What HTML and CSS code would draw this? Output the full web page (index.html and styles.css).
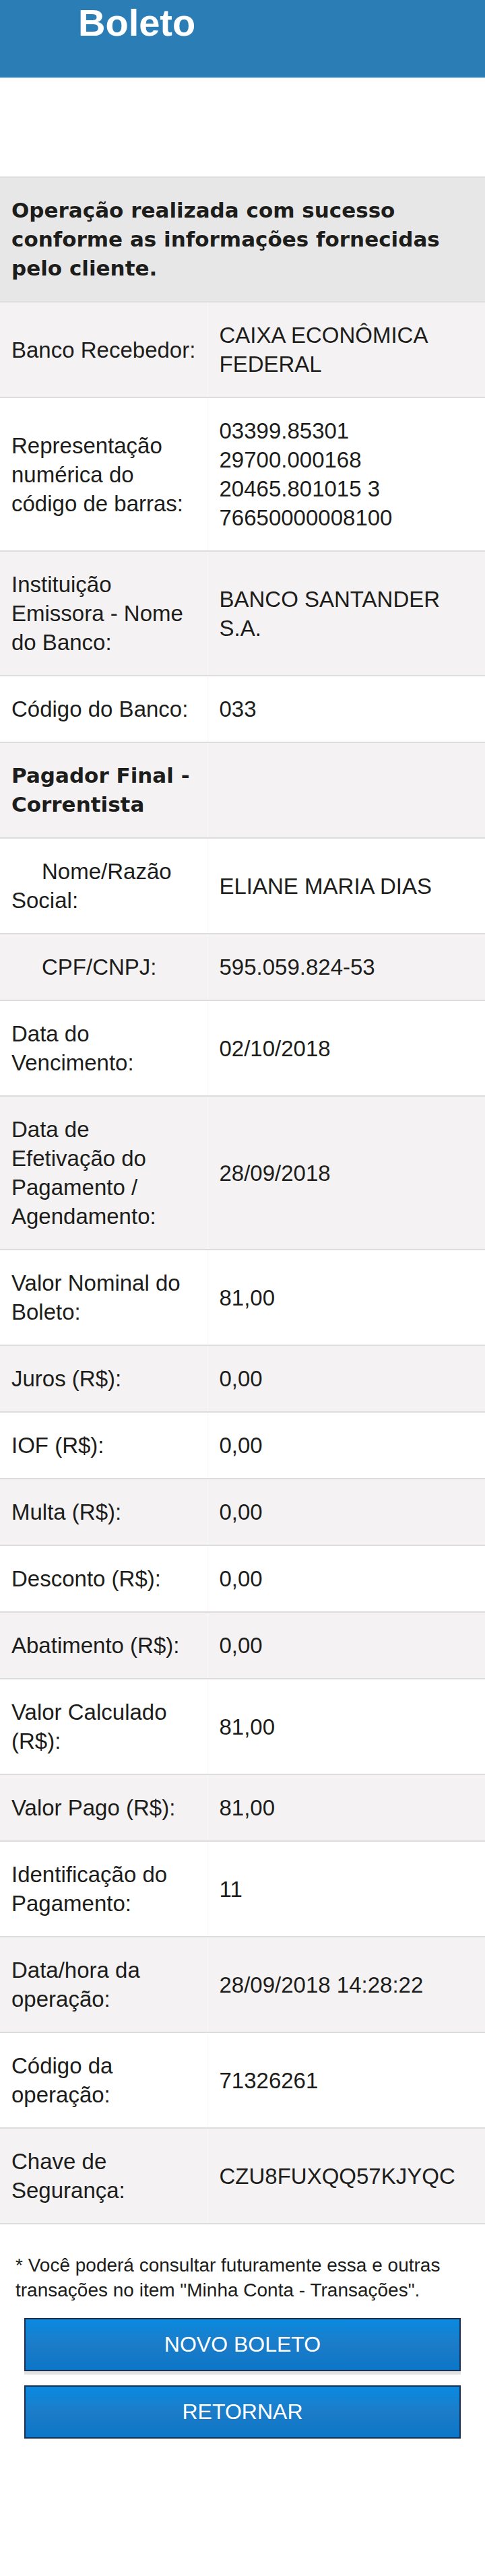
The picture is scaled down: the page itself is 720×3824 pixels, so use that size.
FILE: index.html
```html
<!DOCTYPE html>
<html lang="pt-BR">
<head>
<meta charset="utf-8">
<title>Boleto</title>
<link rel="stylesheet" href="styles.css">
</head>
<body>
<header class="topbar">
  <h1 class="topbar-title">Boleto</h1>
</header>
<main class="content">
  <table class="receipt">
    <colgroup><col class="col-label"><col class="col-value"></colgroup>
    <tbody>
      <tr class="receipt-head"><th colspan="2">Operação realizada com sucesso conforme as informações fornecidas pelo cliente.</th></tr>
      <tr><th>Banco Recebedor:</th><td>CAIXA ECONÔMICA FEDERAL</td></tr>
      <tr><th>Representação numérica do código de barras:</th><td>03399.85301 29700.000168 20465.801015 3 76650000008100</td></tr>
      <tr><th>Instituição Emissora - Nome do Banco:</th><td>BANCO SANTANDER S.A.</td></tr>
      <tr><th>Código do Banco:</th><td>033</td></tr>
      <tr><th class="section-label">Pagador Final - Correntista</th><td></td></tr>
      <tr><th class="indent">Nome/Razão Social:</th><td>ELIANE MARIA DIAS</td></tr>
      <tr><th class="indent">CPF/CNPJ:</th><td>595.059.824-53</td></tr>
      <tr><th>Data do Vencimento:</th><td>02/10/2018</td></tr>
      <tr><th>Data de Efetivação do Pagamento / Agendamento:</th><td>28/09/2018</td></tr>
      <tr><th>Valor Nominal do Boleto:</th><td>81,00</td></tr>
      <tr><th>Juros (R$):</th><td>0,00</td></tr>
      <tr><th>IOF (R$):</th><td>0,00</td></tr>
      <tr><th>Multa (R$):</th><td>0,00</td></tr>
      <tr><th>Desconto (R$):</th><td>0,00</td></tr>
      <tr><th>Abatimento (R$):</th><td>0,00</td></tr>
      <tr><th>Valor Calculado (R$):</th><td>81,00</td></tr>
      <tr><th>Valor Pago (R$):</th><td>81,00</td></tr>
      <tr><th>Identificação do Pagamento:</th><td>11</td></tr>
      <tr><th>Data/hora da operação:</th><td>28/09/2018 14:28:22</td></tr>
      <tr><th>Código da operação:</th><td>71326261</td></tr>
      <tr><th>Chave de Segurança:</th><td>CZU8FUXQQ57KJYQC</td></tr>
    </tbody>
  </table>
  <p class="note">* Você poderá consultar futuramente essa e outras transações no item "Minha Conta - Transações".</p>
  <div class="actions">
    <button class="btn" type="button">NOVO BOLETO</button>
    <button class="btn" type="button">RETORNAR</button>
  </div>
</main>
</body>
</html>
```

FILE: styles.css
```css
html, body {
  margin: 0;
  padding: 0;
  background: #ffffff;
}

body {
  font-family: "Liberation Sans", Arial, sans-serif;
  color: #1d1d1b;
}

.topbar {
  height: 114px;
  background: #2a7db5;
  border-bottom: 2px solid #7db4dc;
  padding-left: 116px;
}

.topbar-title {
  margin: 0;
  padding-top: 6px;
  font-size: 56px;
  line-height: 56px;
  font-weight: 700;
  color: #ffffff;
}

.receipt {
  width: 100%;
  margin-top: 146px;
  border-collapse: collapse;
  table-layout: fixed;
}

.col-label {
  width: 308px;
}

.receipt th,
.receipt td {
  padding: 27px 17px;
  font-size: 33px;
  line-height: 43px;
  font-weight: 400;
  text-align: left;
  vertical-align: middle;
  border-top: 2px solid #dddddd;
}

.receipt th {
  padding-right: 14px;
}

.receipt td {
  border-left: 1px solid #f9f8f8;
}

.receipt tr:nth-child(even) {
  background: #f4f2f3;
}

.receipt tr:last-child th,
.receipt tr:last-child td {
  border-bottom: 2px solid #dddddd;
}

.receipt-head th {
  background: #e7e7e7;
  font-family: "DejaVu Sans", sans-serif;
  font-weight: 700;
  font-size: 31px;
  padding-right: 17px;
}

.receipt th.section-label {
  font-family: "DejaVu Sans", sans-serif;
  font-weight: 700;
  font-size: 31px;
}

.receipt th.indent {
  text-indent: 45px;
}

.note {
  margin: 42px 0 0;
  padding: 0 23px;
  font-size: 28px;
  line-height: 37px;
  color: #1d1d1b;
}

.actions {
  display: flex;
  flex-direction: column;
  gap: 21px;
  padding: 23px 36px 0;
}

.btn {
  height: 79px;
  margin: 0;
  border: 2px solid #1c3150;
  border-radius: 0;
  background: linear-gradient(#0a8ae0 0%, #1c7cc8 50%, #0b76c8 100%);
  box-shadow: 0 5px 0 #e2e2e2;
  color: #ffffff;
  font-family: "Liberation Sans", Arial, sans-serif;
  font-size: 32px;
  font-weight: 400;
  cursor: pointer;
}
```
